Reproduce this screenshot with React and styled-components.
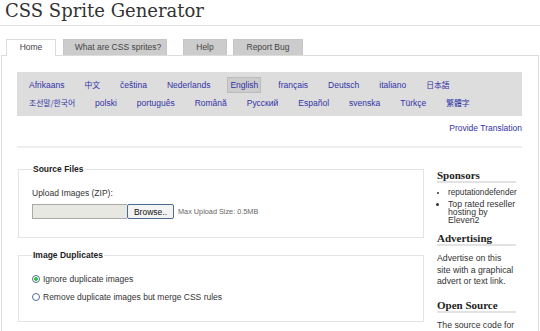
import React from "react";
import styled, { createGlobalStyle } from "styled-components";

const GlobalStyle = createGlobalStyle`
  body {
    margin: 0;
    background: #fff;
    font-family: "Liberation Sans", Arial, sans-serif;
    color: #333;
  }
`;

const Page = styled.div`
  width: 540px;
  height: 331px;
  overflow: hidden;
`;

const Title = styled.h1`
  margin: 0;
  padding: 0 0 3px 5px;
  font-family: "DejaVu Serif", Georgia, serif;
  font-weight: normal;
  font-size: 18px;
  line-height: 22px;
  color: #333;
  border-bottom: 1px solid #e2e2e2;
`;

const TabBar = styled.div`
  display: flex;
  margin-top: 13px;
`;

const Tab = styled.div`
  position: relative;
  z-index: ${(p) => (p.$active ? 1 : 0)};
  box-sizing: border-box;
  width: ${(p) => p.$w}px;
  height: ${(p) => (p.$active ? 17 : 16)}px;
  margin-left: ${(p) => p.$ml}px;
  margin-bottom: ${(p) => (p.$active ? -1 : 0)}px;
  padding-left: ${(p) => p.$shift || 0}px;
  background: ${(p) => (p.$active ? "#fff" : "#cccccc")};
  border: 1px solid ${(p) => (p.$active ? "#dcdcdc" : "#c6c6c6")};
  border-bottom: none;
  font-size: 8.5px;
  line-height: 15px;
  text-align: center;
  color: #444;
`;

const Panel = styled.div`
  margin: 0 1px;
  height: 280px;
  padding: 16px 16px 0 15px;
  border: 1px solid #dcdcdc;
  border-bottom: none;
`;

const LangBar = styled.div`
  display: flex;
  flex-wrap: wrap;
  column-gap: 14px;
  row-gap: 2px;
  padding: 5px 9px;
  background: #dddddd;
`;

const LangLink = styled.a`
  padding: 0 2px;
  border: 1px solid ${(p) => (p.$current ? "#bcbcbc" : "transparent")};
  background: ${(p) => (p.$current ? "#cccccc" : "transparent")};
  font-size: ${(p) => (p.$cjk ? 7.8 : 8.5)}px;
  line-height: 14px;
  color: #3333a6;
  text-decoration: none;
  white-space: nowrap;
  font-family: ${(p) =>
    p.$cjk
      ? '"Noto Sans CJK SC", "Noto Sans CJK KR", sans-serif'
      : '"Liberation Sans", Arial, sans-serif'};
`;

const ProvideLink = styled.a`
  display: block;
  margin-top: 7px;
  text-align: right;
  font-size: 8.5px;
  line-height: 10px;
  color: #3333a6;
  text-decoration: none;
`;

const Divider = styled.div`
  margin-top: 13px;
  border-top: 2px solid #eeeeee;
`;

const MainRow = styled.div`
  display: flex;
  margin-top: 16px;
`;

const MainCol = styled.div`
  width: 406px;
  margin-left: 1px;
`;

const Fieldset = styled.fieldset`
  margin: ${(p) => p.$mt || 0}px 0 0;
  padding: 0 13px 18px;
  border: 1px solid #e4e4e4;
  min-inline-size: 0;
`;

const Legend = styled.legend`
  padding: 0 1px;
  font-size: 8.5px;
  font-weight: bold;
  line-height: 10px;
  color: #222;
`;

const FieldLabel = styled.div`
  margin-top: 14px;
  font-size: 8.5px;
  line-height: 10px;
`;

const UploadRow = styled.div`
  display: flex;
  align-items: center;
  margin-top: 6px;
`;

const FileBox = styled.div`
  box-sizing: border-box;
  width: 95px;
  height: 15px;
  background: #e8e8e2;
  border: 1px solid #a9a9a9;
  border-right: none;
`;

const BrowseButton = styled.button`
  box-sizing: border-box;
  width: 47px;
  height: 15px;
  padding: 0;
  border: 1px solid #4d6b8f;
  border-radius: 2px;
  background: #f3f3f3;
  font-family: "Liberation Sans", Arial, sans-serif;
  font-size: 8.5px;
  color: #111;
`;

const Hint = styled.span`
  margin-left: 4px;
  font-size: 7.3px;
  color: #666;
`;

const RadioRow = styled.label`
  display: flex;
  align-items: center;
  margin-top: ${(p) => p.$mt}px;
  font-size: 8.5px;
  line-height: 12px;
`;

const Radio = styled.input`
  appearance: none;
  box-sizing: border-box;
  width: 8px;
  height: 8px;
  margin: 0 3px 0 0;
  border: 1px solid #4f6f95;
  border-radius: 50%;
  background: #fff;
  &:checked {
    background: radial-gradient(circle, #3fbf3f 0 1.6px, #fff 2px);
  }
`;

const Sidebar = styled.div`
  width: 79px;
  margin-left: 13px;
  padding-top: 5px;
  font-size: 8.7px;
`;

const SideHeading = styled.div`
  margin-top: ${(p) => p.$mt || 0}px;
  font-family: "Liberation Serif", Georgia, serif;
  font-weight: bold;
  font-size: 11px;
  line-height: 12px;
  color: #222;
  border-bottom: 2px solid #e2e2e2;
`;

const SponsorList = styled.ul`
  margin: 6px 0 0;
  padding-left: 11px;
  list-style: disc;
`;

const SponsorItem = styled.li`
  margin-bottom: 3px;
  line-height: 8px;
  white-space: ${(p) => (p.$nowrap ? "nowrap" : "normal")};
  font-size: ${(p) => (p.$nowrap ? 8.2 : 8.7)}px;
`;

const SideText = styled.p`
  margin: 7px 0 0;
  line-height: 11.5px;
`;

const tabs = [
  { label: "Home", w: 50, ml: 6, active: true },
  { label: "What are CSS sprites?", w: 104, ml: 7, shift: 6 },
  { label: "Help", w: 44, ml: 16 },
  { label: "Report Bug", w: 70, ml: 6 },
];

const languages = [
  { name: "Afrikaans" },
  { name: "中文", cjk: true },
  { name: "čeština" },
  { name: "Nederlands" },
  { name: "English", current: true },
  { name: "français" },
  { name: "Deutsch" },
  { name: "italiano" },
  { name: "日本語", cjk: true },
  { name: "조선말/한국어", cjk: true },
  { name: "polski" },
  { name: "português" },
  { name: "Română" },
  { name: "Русский" },
  { name: "Español" },
  { name: "svenska" },
  { name: "Türkçe" },
  { name: "繁體字", cjk: true },
];

export default function App() {
  return (
    <Page>
      <GlobalStyle />
      <Title>CSS Sprite Generator</Title>
      <TabBar>
        {tabs.map((t) => (
          <Tab key={t.label} $w={t.w} $ml={t.ml} $shift={t.shift} $active={t.active}>
            {t.label}
          </Tab>
        ))}
      </TabBar>
      <Panel>
        <LangBar>
          {languages.map((l) => (
            <LangLink key={l.name} href="#" $cjk={l.cjk} $current={l.current}>
              {l.name}
            </LangLink>
          ))}
        </LangBar>
        <ProvideLink href="#">Provide Translation</ProvideLink>
        <Divider />
        <MainRow>
          <MainCol>
            <Fieldset>
              <Legend>Source Files</Legend>
              <FieldLabel>Upload Images (ZIP):</FieldLabel>
              <UploadRow>
                <FileBox />
                <BrowseButton>Browse..</BrowseButton>
                <Hint>Max Upload Size: 0.5MB</Hint>
              </UploadRow>
            </Fieldset>
            <Fieldset $mt={12}>
              <Legend>Image Duplicates</Legend>
              <RadioRow $mt={13}>
                <Radio type="radio" name="dup" defaultChecked />
                Ignore duplicate images
              </RadioRow>
              <RadioRow $mt={6}>
                <Radio type="radio" name="dup" />
                Remove duplicate images but merge CSS rules
              </RadioRow>
            </Fieldset>
          </MainCol>
          <Sidebar>
            <SideHeading>Sponsors</SideHeading>
            <SponsorList>
              <SponsorItem $nowrap>reputationdefender</SponsorItem>
              <SponsorItem>Top rated reseller hosting by Eleven2</SponsorItem>
            </SponsorList>
            <SideHeading $mt={8}>Advertising</SideHeading>
            <SideText>Advertise on this site with a graphical advert or text link.</SideText>
            <SideHeading $mt={11}>Open Source</SideHeading>
            <SideText>The source code for</SideText>
          </Sidebar>
        </MainRow>
      </Panel>
    </Page>
  );
}
